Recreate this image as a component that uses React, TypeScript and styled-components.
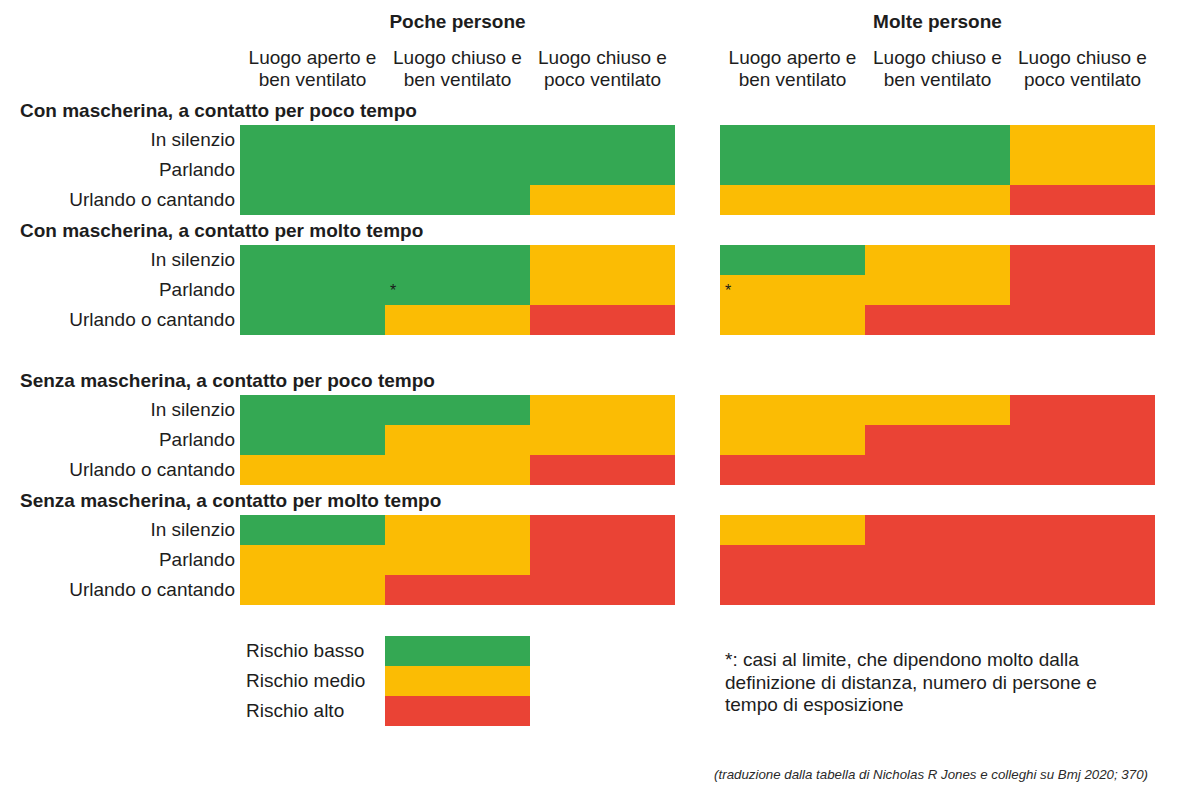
import React from 'react';
import styled, { createGlobalStyle } from 'styled-components';

type Risk = 'g' | 'y' | 'r';

const COLORS: Record<Risk, string> = {
  g: '#34a853',
  y: '#fbbc04',
  r: '#ea4335',
};

const GlobalStyle = createGlobalStyle`
  html, body { margin: 0; padding: 0; background: #ffffff; }
  body {
    font-family: "Liberation Sans", Arial, sans-serif;
    color: #1d1d1d;
  }
`;

const Page = styled.div`
  width: 1177px;
  height: 797px;
  box-sizing: border-box;
  padding-top: 11px;
  display: flex;
  flex-direction: column;
`;

/* label column | low-crowd group | gutter | high-crowd group */
const Band = styled.div<{ $mt?: number }>`
  display: grid;
  grid-template-columns: 240px 435px 45px 435px;
  margin-top: ${(p) => p.$mt ?? 0}px;
`;

const GroupTitle = styled.div<{ $col: number }>`
  grid-column: ${(p) => p.$col};
  text-align: center;
  font-weight: 700;
  font-size: 19px;
  line-height: 22px;
`;

const ColHeaders = styled.div<{ $col: number }>`
  grid-column: ${(p) => p.$col};
  display: grid;
  grid-template-columns: repeat(3, 145px);
`;

const ColHeader = styled.div`
  text-align: center;
  font-size: 19px;
  line-height: 22px;
  white-space: nowrap;
`;

const SectionTitle = styled.div<{ $pt: number }>`
  grid-column: 1 / -1;
  padding: ${(p) => p.$pt}px 0 3px 20px;
  font-weight: 700;
  font-size: 19px;
  line-height: 22px;
`;

const Labels = styled.div`
  grid-column: 1;
  display: flex;
  flex-direction: column;
`;

const RowLabel = styled.div`
  height: 30px;
  display: flex;
  align-items: center;
  justify-content: flex-end;
  padding-right: 5px;
  font-size: 19px;
  white-space: nowrap;
`;

const Matrix = styled.div<{ $col: number }>`
  grid-column: ${(p) => p.$col};
  display: grid;
  grid-template-columns: repeat(3, 145px);
  grid-auto-rows: 30px;
`;

const Cell = styled.div<{ $risk: Risk }>`
  position: relative;
  background: ${(p) => COLORS[p.$risk]};
`;

const Star = styled.span`
  position: absolute;
  left: 5px;
  top: 8px;
  font-size: 16px;
  line-height: 1;
  color: #1a1a1a;
`;

const LegendGrid = styled.div`
  grid-column: 2;
  display: grid;
  grid-template-columns: 145px 145px;
  grid-auto-rows: 30px;
`;

const LegendLabel = styled.div`
  display: flex;
  align-items: center;
  padding-left: 6px;
  font-size: 19px;
`;

const LegendSwatch = styled.div<{ $risk: Risk }>`
  background: ${(p) => COLORS[p.$risk]};
`;

const Footnote = styled.div`
  grid-column: 4;
  padding: 13px 0 0 5px;
  font-size: 19px;
  line-height: 22.5px;
  white-space: nowrap;
`;

const Caption = styled.div`
  margin-top: 41px;
  padding-right: 29px;
  text-align: right;
  font-style: italic;
  font-size: 13.3px;
  line-height: 16px;
  color: #2a2a2a;
`;

type CellSpec = string; // e.g. "g", "g*"

interface SectionData {
  title: string;
  left: CellSpec[][];
  right: CellSpec[][];
}

const ROW_LABELS = ['In silenzio', 'Parlando', 'Urlando o cantando'];

const SECTIONS: SectionData[] = [
  {
    title: 'Con mascherina, a contatto per poco tempo',
    left: [
      ['g', 'g', 'g'],
      ['g', 'g', 'g'],
      ['g', 'g', 'y'],
    ],
    right: [
      ['g', 'g', 'y'],
      ['g', 'g', 'y'],
      ['y', 'y', 'r'],
    ],
  },
  {
    title: 'Con mascherina, a contatto per molto tempo',
    left: [
      ['g', 'g', 'y'],
      ['g', 'g*', 'y'],
      ['g', 'y', 'r'],
    ],
    right: [
      ['g', 'y', 'r'],
      ['y*', 'y', 'r'],
      ['y', 'r', 'r'],
    ],
  },
  {
    title: 'Senza mascherina, a contatto per poco tempo',
    left: [
      ['g', 'g', 'y'],
      ['g', 'y', 'y'],
      ['y', 'y', 'r'],
    ],
    right: [
      ['y', 'y', 'r'],
      ['y', 'r', 'r'],
      ['r', 'r', 'r'],
    ],
  },
  {
    title: 'Senza mascherina, a contatto per molto tempo',
    left: [
      ['g', 'y', 'r'],
      ['y', 'y', 'r'],
      ['y', 'r', 'r'],
    ],
    right: [
      ['y', 'r', 'r'],
      ['r', 'r', 'r'],
      ['r', 'r', 'r'],
    ],
  },
];

const HEADERS: [string, string][] = [
  ['Luogo aperto e', 'ben ventilato'],
  ['Luogo chiuso e', 'ben ventilato'],
  ['Luogo chiuso e', 'poco ventilato'],
];

const RiskMatrix: React.FC<{ data: CellSpec[][]; col: number }> = ({ data, col }) => (
  <Matrix $col={col}>
    {data.flatMap((row, r) =>
      row.map((spec, c) => (
        <Cell key={`${r}-${c}`} $risk={spec[0] as Risk}>
          {spec.endsWith('*') && <Star>*</Star>}
        </Cell>
      ))
    )}
  </Matrix>
);

const HeaderRow: React.FC<{ col: number }> = ({ col }) => (
  <ColHeaders $col={col}>
    {HEADERS.map(([a, b], i) => (
      <ColHeader key={i}>
        {a}
        <br />
        {b}
      </ColHeader>
    ))}
  </ColHeaders>
);

export default function App() {
  return (
    <>
      <GlobalStyle />
      <Page>
        <Band>
          <GroupTitle $col={2}>Poche persone</GroupTitle>
          <GroupTitle $col={4}>Molte persone</GroupTitle>
        </Band>
        <Band $mt={14}>
          <HeaderRow col={2} />
          <HeaderRow col={4} />
        </Band>
        {SECTIONS.map((s, i) => (
          <Band key={s.title} $mt={i === 2 ? 30 : 0}>
            <SectionTitle $pt={i === 0 ? 9 : 5}>{s.title}</SectionTitle>
            <Labels>
              {ROW_LABELS.map((l) => (
                <RowLabel key={l}>{l}</RowLabel>
              ))}
            </Labels>
            <RiskMatrix data={s.left} col={2} />
            <RiskMatrix data={s.right} col={4} />
          </Band>
        ))}
        <Band $mt={31}>
          <LegendGrid>
            <LegendLabel>Rischio basso</LegendLabel>
            <LegendSwatch $risk="g" />
            <LegendLabel>Rischio medio</LegendLabel>
            <LegendSwatch $risk="y" />
            <LegendLabel>Rischio alto</LegendLabel>
            <LegendSwatch $risk="r" />
          </LegendGrid>
          <Footnote>
            *: casi al limite, che dipendono molto dalla
            <br />
            definizione di distanza, numero di persone e
            <br />
            tempo di esposizione
          </Footnote>
        </Band>
        <Caption>
          (traduzione dalla tabella di Nicholas R Jones e colleghi su Bmj 2020; 370)
        </Caption>
      </Page>
    </>
  );
}
